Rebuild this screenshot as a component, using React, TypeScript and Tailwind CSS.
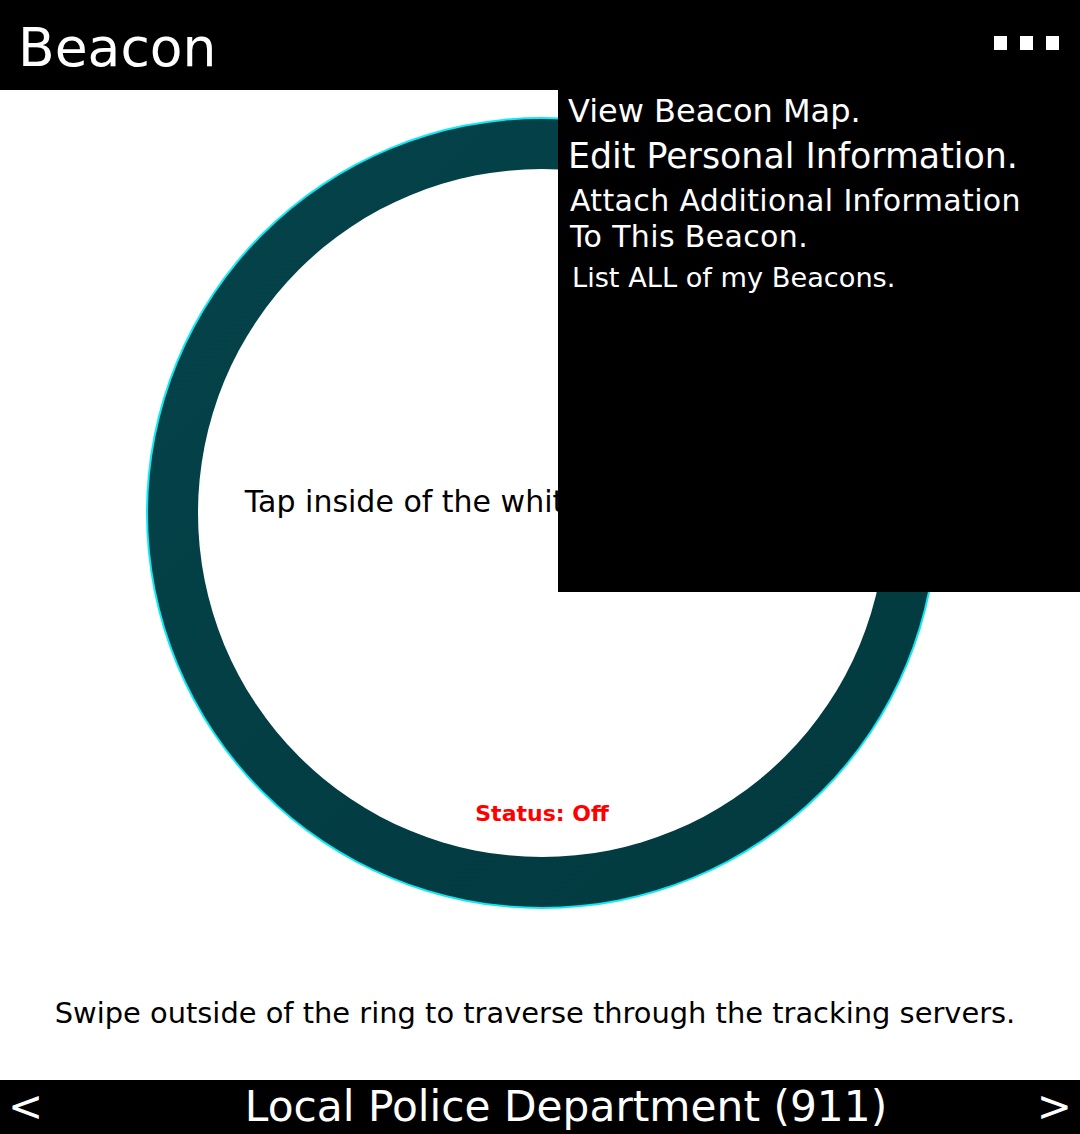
import { useState } from "react";

const FONT = "font-['DejaVu_Sans',sans-serif]";

const MENU = [
  { label: "View Beacon Map.", cls: "pl-[10px] text-[32px] leading-[36px]" },
  { label: "Edit Personal Information.", cls: "pl-[10px] text-[34.8px] leading-[40px]" },
  {
    label: "Attach Additional Information\nTo This Beacon.",
    cls: "pl-[12px] text-[30px] leading-[36px] tracking-[0.35px] whitespace-pre-line",
  },
  { label: "List ALL of my Beacons.", cls: "pl-[14px] text-[27.2px] leading-[32px]" },
];

function MoreButton({ onClick }: { onClick: () => void }) {
  return (
    <button onClick={onClick} className="flex items-center gap-[13px] pr-[21px] mb-[4px]">
      <span className="w-[13px] h-[14px] bg-white" />
      <span className="w-[13px] h-[14px] bg-white" />
      <span className="w-[13px] h-[14px] bg-white" />
    </button>
  );
}

function Ring() {
  return (
    <div className="ml-[4px] w-[792px] h-[792px] rounded-full p-[2px] bg-[#0fe8f5] shrink-0">
      <div className="w-full h-full rounded-full p-[50px] bg-gradient-to-br from-[#04434a] to-[#02393e]">
        <div className="w-full h-full rounded-full bg-white flex flex-col items-center pt-[315px]">
          <span className="text-[30px] leading-[36px] text-black whitespace-nowrap">
            Tap inside of the white circle to turn on.
          </span>
          <span className="mt-[280px] text-[22px] leading-[28px] font-bold text-[#ff0000]">
            Status: Off
          </span>
        </div>
      </div>
    </div>
  );
}

export default function App() {
  const [menuOpen, setMenuOpen] = useState(true);

  return (
    <div className={`${FONT} w-[1080px] h-[1134px] bg-white flex flex-col overflow-hidden`}>
      {/* header */}
      <div className="h-[90px] bg-black flex items-center justify-between shrink-0">
        <span className="pl-[18px] pt-[6px] text-[53.5px] leading-[62px] text-white">Beacon</span>
        <MoreButton onClick={() => setMenuOpen((v) => !v)} />
      </div>

      {/* main */}
      <div className="relative flex-1 flex flex-col items-center pt-[27px]">
        <Ring />
        <p className="mt-[87px] ml-[-10px] text-[28.9px] leading-[34px] text-black whitespace-nowrap">
          Swipe outside of the ring to traverse through the tracking servers.
        </p>

        {menuOpen && (
          <div className="absolute top-0 right-0 w-[522px] h-[502px] bg-black flex flex-col gap-[7px] pt-[3px] text-white">
            {MENU.map((m) => (
              <button key={m.label} className={`text-left ${m.cls}`}>
                {m.label}
              </button>
            ))}
          </div>
        )}
      </div>

      {/* footer */}
      <div className="h-[54px] bg-black flex items-center px-[8px] text-white shrink-0">
        <button className="text-[42px] leading-[54px]">&lt;</button>
        <span className="flex-1 text-center pl-[52px] text-[42.3px] leading-[54px] whitespace-nowrap">
          Local Police Department (911)
        </span>
        <button className="text-[42px] leading-[54px]">&gt;</button>
      </div>
    </div>
  );
}
